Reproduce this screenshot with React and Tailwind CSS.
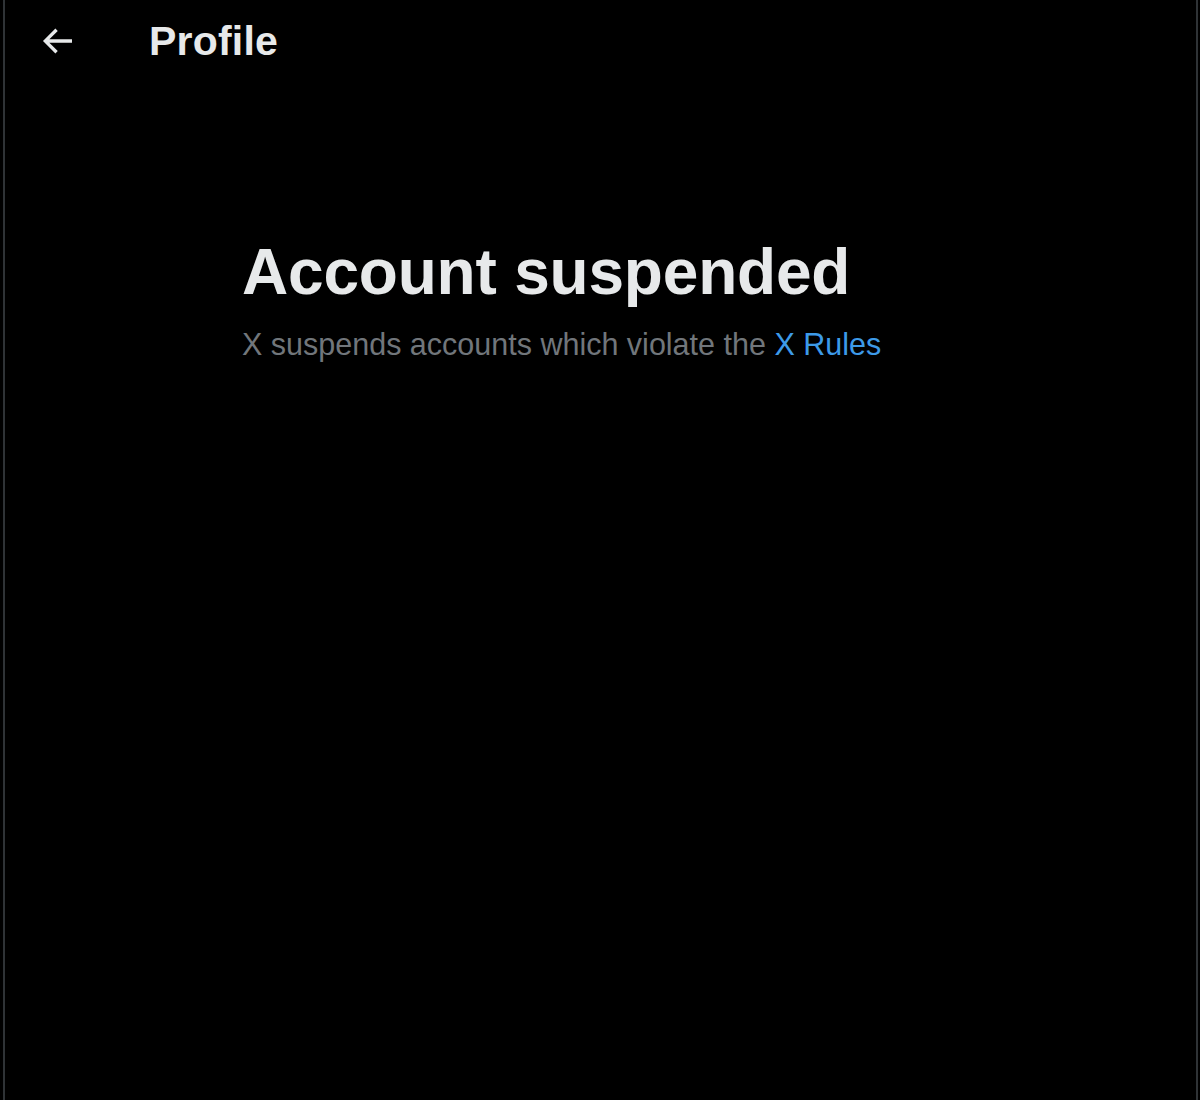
import React from 'react';

const BackArrow = () => (
  <svg viewBox="0 0 24 24" className="h-[40px] w-[40px]" fill="currentColor">
    <path d="M7.414 13l5.043 5.04-1.414 1.42L3.586 12l7.457-7.46 1.414 1.42L7.414 11H21v2H7.414z" />
  </svg>
);

const App = () => {
  return (
    <div
      className="h-[1100px] w-[1200px] bg-black"
      style={{ fontFamily: '"Liberation Sans", Arial, sans-serif' }}
    >
      <div className="flex h-full w-full pl-[3px] pr-[2px]">
        <div className="flex h-full flex-1 flex-col border-x-2 border-[#2f3336]">
          {/* Header */}
          <div className="flex h-[82px] items-center">
            <div className="flex w-[144px] items-center pl-[32px] text-[#e7e9ea]">
              <BackArrow />
            </div>
            <h2 className="text-[41px] font-bold leading-none tracking-[0.2px] text-[#e7e9ea]">Profile</h2>
          </div>

          {/* Empty state */}
          <div className="pl-[237px] pt-[155px]">
            <h1 className="text-[64px] font-bold leading-[1.1] tracking-[-0.2px] text-[#e7e9ea]">
              Account suspended
            </h1>
            <p className="mt-[18px] text-[30.5px] leading-[1.3] text-[#71767b]">
              X suspends accounts which violate the{' '}
              <a href="#" className="text-[#3d9ae8]">
                X Rules
              </a>
            </p>
          </div>
        </div>
      </div>
    </div>
  );
};

export default App;
